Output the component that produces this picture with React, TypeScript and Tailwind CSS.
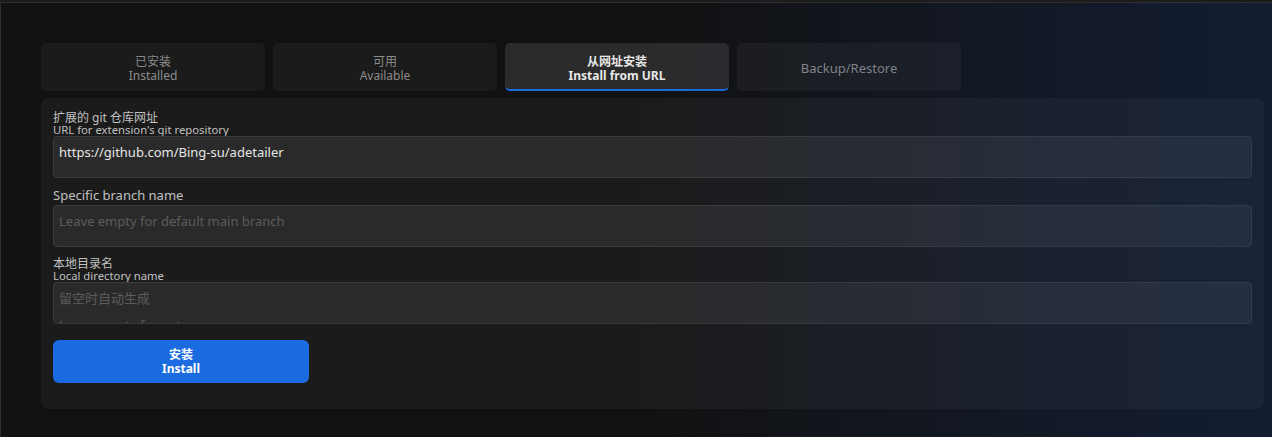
import React from 'react'

const tabs = [
    { zh: '已安装', en: 'Installed' },
    { zh: '可用', en: 'Available' },
    { zh: '从网址安装', en: 'Install from URL', active: true },
    { zh: '', en: 'Backup/Restore' },
]

const font = { fontFamily: '"Noto Sans", "Noto Sans CJK SC", sans-serif' }

function Field({ zh, en, children }: { zh?: string; en: string; children: React.ReactNode }) {
    return (
        <div className="flex flex-col">
            <div className="leading-[12px] text-[#c0c0c0]">
                {zh && <div className="text-[12px]">{zh}</div>}
                <div className="text-[11.3px]">{en}</div>
            </div>
            {children}
        </div>
    )
}

export default function App() {
    return (
        <div className="w-[1272px] h-[437px] bg-[#1c1c1c] pt-[2px] overflow-hidden" style={font}>
            <div className="relative h-[435px] bg-[#111111] border-t border-l border-[#2f2f2f]">
                <div className="px-[40px] pt-[40px]">
                    <div className="flex gap-[8px]">
                        {tabs.map((t) => (
                            <div
                                key={t.en}
                                className={`w-[224px] h-[48px] rounded-[5px] flex flex-col items-center text-[12px] leading-[14px] ${
                                    t.zh ? 'pt-[12px]' : 'pt-[16px]'
                                } ${
                                    t.active
                                        ? 'bg-[#2b2b2b] text-[#e8e8e8] font-bold border-b-2 border-[#1a6ae0]'
                                        : 'bg-[#1b1b1b] text-[#8a8a8a]'
                                }`}
                            >
                                {t.zh && <span>{t.zh}</span>}
                                <span className={t.zh ? '' : 'text-[13px] leading-[18px]'}>{t.en}</span>
                            </div>
                        ))}
                    </div>

                    <div className="mt-[7px] w-[1223px] h-[311px] bg-[#1b1b1b] rounded-[7px] px-[12px] pt-[14px] flex flex-col">
                        <Field zh="扩展的 git 仓库网址" en="URL for extension's git repository">
                            <div className="h-[42px] bg-[#2a2a2a] border border-[#3b3b3b] rounded-[4px] px-[5px] pt-[5px] text-[13px] leading-[20px] text-[#e6e6e6]">
                                https://github.com/Bing-su/adetailer
                            </div>
                        </Field>

                        <div className="mt-[8px] text-[13px] leading-[18px] text-[#c0c0c0]">Specific branch name</div>
                        <div className="mt-[1px] h-[42px] bg-[#2a2a2a] border border-[#3b3b3b] rounded-[4px] px-[5px] pt-[5px] text-[13px] leading-[20px] text-[#5c5c5c]">
                            Leave empty for default main branch
                        </div>

                        <div className="mt-[11px]">
                            <Field zh="本地目录名" en="Local directory name">
                                <div className="h-[42px] bg-[#2a2a2a] border border-[#3b3b3b] rounded-[4px] px-[5px] pt-[5px] text-[13px] leading-[20px] text-[#5c5c5c] overflow-hidden">
                                    <div>留空时自动生成</div>
                                    <div className="mt-[7px]">Leave empty for auto</div>
                                </div>
                            </Field>
                        </div>

                        <button className="mt-[16px] w-[256px] h-[43px] bg-[#1a6ae0] rounded-[6px] flex flex-col items-center justify-center text-white font-bold text-[12px] leading-[14px]">
                            <span>安装</span>
                            <span>Install</span>
                        </button>
                    </div>
                </div>
                <div className="pointer-events-none absolute inset-0 bg-gradient-to-r from-transparent from-50% to-[#173a80]/30" />
            </div>
        </div>
    )
}
